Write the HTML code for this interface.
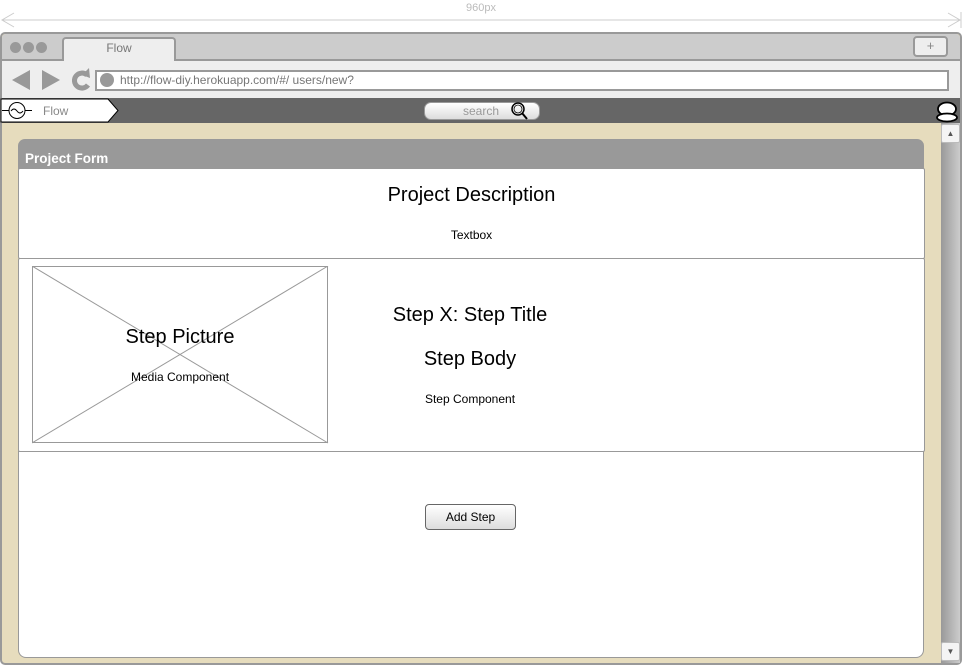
<!DOCTYPE html>
<html><head><style>
*{box-sizing:border-box;margin:0;padding:0}
body{width:962px;height:665px;background:#fff;position:relative;overflow:hidden;font-family:"Liberation Sans",Arial,sans-serif}
.a{position:absolute}
</style></head><body>
<div class="a" style="left:0;top:2px;width:962px;text-align:center;font-size:11px;color:#bbb">960px</div>
<svg class="a" style="left:0;top:10px" width="962" height="22"><line x1="2" y1="10" x2="960" y2="10" stroke="#ccc"/><polyline points="14,3 2,10 14,17" fill="none" stroke="#ccc"/><polyline points="948,3 960,10 948,17" fill="none" stroke="#ccc"/><line x1="961" y1="2" x2="961" y2="18" stroke="#ccc"/></svg>
<div class="a" style="left:0;top:32px;width:962px;height:633px;border:2px solid #999;border-radius:5px;background:#e6dcbd"></div>
<div class="a" style="left:2px;top:34px;width:958px;height:27px;background:#ccc;border-bottom:2px solid #999;border-radius:4px 4px 0 0"></div>
<div class="a" style="left:10px;top:42px;width:11px;height:11px;border-radius:50%;background:#999"></div>
<div class="a" style="left:23px;top:42px;width:11px;height:11px;border-radius:50%;background:#999"></div>
<div class="a" style="left:36px;top:42px;width:11px;height:11px;border-radius:50%;background:#999"></div>
<div class="a" style="left:62px;top:37px;width:114px;height:24px;background:#eee;border:2px solid #999;border-bottom:none;border-radius:4px 4px 0 0;text-align:center;font-size:12px;color:#777;line-height:18px">Flow</div>
<div class="a" style="left:913px;top:36px;width:35px;height:21px;background:#eee;border:2px solid #999;border-radius:4px;text-align:center;font-size:13px;color:#888;line-height:16px">+</div>
<div class="a" style="left:2px;top:61px;width:958px;height:37px;background:#eee"></div>
<svg class="a" style="left:10px;top:66px" width="85" height="28"><polygon points="2,14 20,4 20,24" fill="#999"/><polygon points="32,4 50,14 32,24" fill="#999"/><path d="M77,9 A7.5,7.5 0 1 0 78,19" fill="none" stroke="#999" stroke-width="5"/><polygon points="72,9 79,2 80,12" fill="#999"/></svg>
<div class="a" style="left:95px;top:70px;width:854px;height:21px;background:#fff;border:2px solid #999"></div>
<div class="a" style="left:100px;top:73px;width:14px;height:14px;border-radius:50%;background:#999"></div>
<div class="a" style="left:120px;top:72px;font-size:12px;color:#777;line-height:16px">http://flow-diy.herokuapp.com/#/ users/new?</div>
<div class="a" style="left:2px;top:98px;width:958px;height:25px;background:#666"></div>
<svg class="a" style="left:0;top:98px" width="122" height="26"><polygon points="1,1 108,1 118,12.5 108,24 1,24" fill="#fff" stroke="#000"/><circle cx="17" cy="12.5" r="8" fill="none" stroke="#000"/><line x1="2" y1="12.5" x2="9" y2="12.5" stroke="#000"/><line x1="25" y1="12.5" x2="32" y2="12.5" stroke="#000"/><path d="M11,13 q3,-4 6,0 q3,4 6,0" fill="none" stroke="#000"/><text x="43" y="17" font-size="12" fill="#888" font-family="Liberation Sans">Flow</text></svg>
<div class="a" style="left:424px;top:102px;width:116px;height:18px;background:linear-gradient(#fff,#ddd);border:1px solid #999;border-radius:7px;font-size:12px;color:#999;line-height:16px;padding-left:38px">search</div>
<svg class="a" style="left:510px;top:101px" width="20" height="20"><circle cx="8" cy="8" r="6" fill="none" stroke="#000" stroke-width="1.5"/><circle cx="8" cy="8" r="4" fill="none" stroke="#000" stroke-width="0.8"/><line x1="12" y1="12" x2="17" y2="18" stroke="#000" stroke-width="2"/></svg>
<svg class="a" style="left:936px;top:101px" width="24" height="22"><ellipse cx="11" cy="8" rx="9" ry="6.5" fill="#fff" stroke="#000" stroke-width="1.8"/><ellipse cx="11" cy="16.5" rx="10" ry="4" fill="#fff" stroke="#000" stroke-width="1.8"/></svg>
<div class="a" style="left:941px;top:123px;width:19px;height:540px;background:linear-gradient(90deg,#999,#ccc)"></div>
<div class="a" style="left:941px;top:124px;width:19px;height:19px;background:#f4f4f4;border:1px solid #bbb;border-radius:2px;font-size:8px;text-align:center;line-height:17px;color:#555">▲</div>
<div class="a" style="left:941px;top:642px;width:19px;height:19px;background:#f4f4f4;border:1px solid #bbb;border-radius:2px;font-size:8px;text-align:center;line-height:17px;color:#555">▼</div>
<div class="a" style="left:18px;top:139px;width:906px;height:30px;background:#999;border-radius:7px 7px 0 0;color:#fff;font-weight:bold;font-size:13.5px;padding:12px 0 0 7px">Project Form</div>
<div class="a" style="left:18px;top:451px;width:906px;height:207px;background:#fff;border:1px solid #999;border-top:none;border-radius:0 0 8px 8px"></div>
<div class="a" style="left:18px;top:168px;width:907px;height:91px;background:#fff;border:1px solid #999;border-radius:2px"></div>
<div class="a" style="left:18px;top:184px;width:907px;text-align:center;font-size:20px">Project Description</div>
<div class="a" style="left:18px;top:228px;width:907px;text-align:center;font-size:12px">Textbox</div>
<div class="a" style="left:18px;top:258px;width:907px;height:194px;background:#fff;border:1px solid #999;border-radius:2px"></div>
<svg class="a" style="left:32px;top:266px" width="297" height="178"><rect x="0.5" y="0.5" width="295" height="176" fill="#fff" stroke="#999"/><line x1="0" y1="0" x2="296" y2="177" stroke="#999"/><line x1="296" y1="0" x2="0" y2="177" stroke="#999"/></svg>
<div class="a" style="left:32px;top:326px;width:296px;text-align:center;font-size:20px">Step Picture</div>
<div class="a" style="left:32px;top:370px;width:296px;text-align:center;font-size:12px">Media Component</div>
<div class="a" style="left:330px;top:304px;width:280px;text-align:center;font-size:20px">Step X: Step Title</div>
<div class="a" style="left:330px;top:348px;width:280px;text-align:center;font-size:20px">Step Body</div>
<div class="a" style="left:330px;top:392px;width:280px;text-align:center;font-size:12px">Step Component</div>
<div class="a" style="left:425px;top:504px;width:91px;height:26px;background:linear-gradient(#fff,#ddd);border:1px solid #666;border-radius:4px;text-align:center;font-size:12px;line-height:24px">Add Step</div>
</body></html>
